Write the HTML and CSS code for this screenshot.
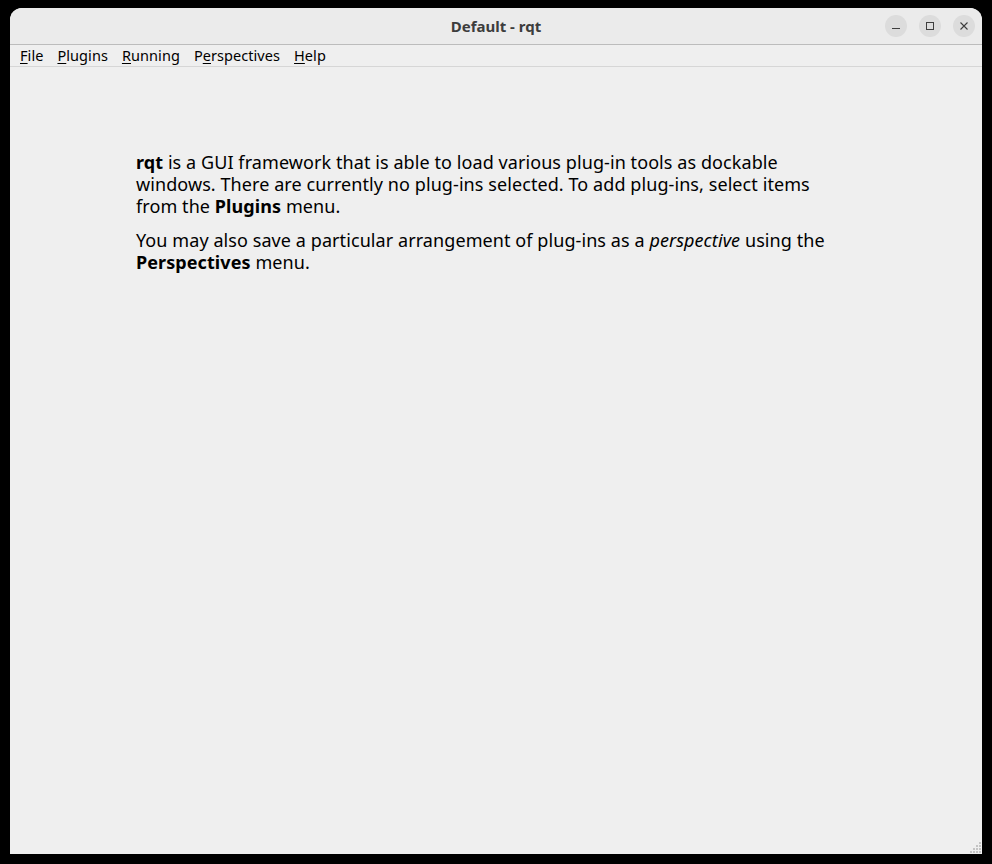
FILE: index.html
```html
<!DOCTYPE html>
<html lang="en">
<head>
<meta charset="utf-8">
<title>Default - rqt</title>
<link rel="stylesheet" href="styles.css">
</head>
<body>
<div class="window">
  <header class="titlebar">
    <div class="title">Default - rqt</div>
    <div class="controls">
      <button class="ctl" aria-label="Minimize"><svg width="16" height="16" viewBox="0 0 16 16"><path d="M4 10.5h8" stroke="#3d3d3d" stroke-width="1" fill="none"/></svg></button>
      <button class="ctl" aria-label="Maximize"><svg width="16" height="16" viewBox="0 0 16 16"><rect x="4.5" y="4.5" width="7" height="7" stroke="#3d3d3d" stroke-width="1" fill="none"/></svg></button>
      <button class="ctl" aria-label="Close"><svg width="16" height="16" viewBox="0 0 16 16"><path d="M4.5 4.5l7 7M11.5 4.5l-7 7" stroke="#3d3d3d" stroke-width="1.1" fill="none"/></svg></button>
    </div>
  </header>
  <nav class="menubar">
    <span class="menu"><u>F</u>ile</span>
    <span class="menu"><u>P</u>lugins</span>
    <span class="menu"><u>R</u>unning</span>
    <span class="menu">P<u>e</u>rspectives</span>
    <span class="menu"><u>H</u>elp</span>
  </nav>
  <main class="content">
    <p class="para"><b>rqt</b> is a GUI framework that is able to load various plug-in tools as dockable<br>windows. There are currently no plug-ins selected. To add plug-ins, select items<br>from the <b>Plugins</b> menu.</p>
    <p class="para">You may also save a particular arrangement of plug-ins as a <i>perspective</i> using the<br><b>Perspectives</b> menu.</p>
    <svg class="grip" width="12" height="12" viewBox="0 0 12 12" aria-hidden="true"><path d="M9 0h2v2H9zM6 3h2v2H6zM9 3h2v2H9zM3 6h2v2H3zM6 6h2v2H6zM9 6h2v2H9zM0 9h2v2H0zM3 9h2v2H3zM6 9h2v2H6zM9 9h2v2H9z" fill="#c4c4c4"/></svg>
  </main>
</div>
</body>
</html>
```
FILE: styles.css
```css
html, body {
  margin: 0;
  height: 100%;
  background: #000;
}
body {
  padding: 8px 10px 10px;
  box-sizing: border-box;
  font-family: "Noto Sans", sans-serif;
  color: #000;
}
.window {
  height: 846px;
  display: flex;
  flex-direction: column;
  background: #efefef;
  border-radius: 12px 12px 0 0;
  overflow: hidden;
}
.titlebar {
  height: 36px;
  flex: none;
  position: relative;
  display: flex;
  align-items: center;
  justify-content: flex-end;
  background: #ebebeb;
  border-bottom: 1px solid #bcbcbc;
}
.title {
  position: absolute;
  left: 0;
  right: 0;
  text-align: center;
  font-size: 15px;
  font-weight: 700;
  color: #3d3d3d;
}
.controls {
  display: flex;
  gap: 12px;
  padding-right: 7px;
}
.ctl {
  width: 22px;
  height: 22px;
  padding: 0;
  border: 0;
  border-radius: 50%;
  background: #dcdcdc;
  display: flex;
  align-items: center;
  justify-content: center;
}
.menubar {
  height: 19px;
  padding-bottom: 2px;
  flex: none;
  display: flex;
  align-items: center;
  gap: 14px;
  padding-left: 10px;
  font-size: 14.5px;
  letter-spacing: 0.06px;
  background: #efefef;
  border-bottom: 1px solid #d6d6d6;
}
.menu u {
  text-decoration-thickness: 1px;
  text-underline-offset: 2px;
}
.content {
  flex: 1;
  position: relative;
  padding-top: 84px;
  padding-left: 126px;
}
.para {
  margin: 0 0 12px;
  font-size: 18px;
  line-height: 22px;
  letter-spacing: 0.08px;
}
.grip {
  position: absolute;
  right: 0;
  bottom: 0;
}
```
